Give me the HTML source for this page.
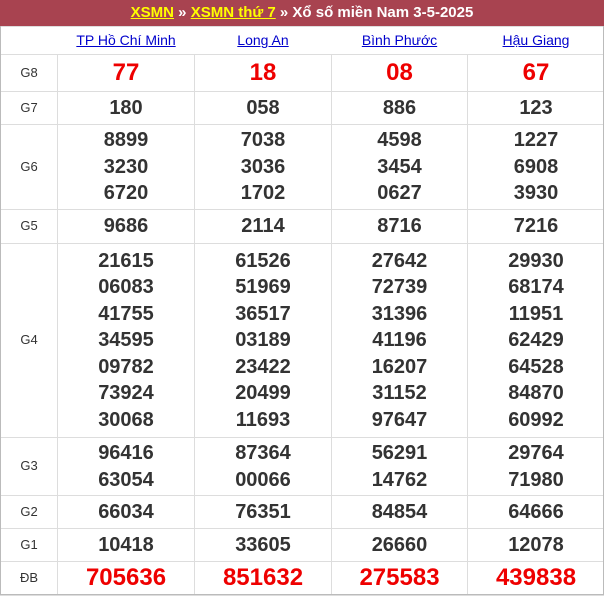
<!DOCTYPE html><html><head><meta charset="utf-8"><style>
body{margin:0;width:604px;height:596px;overflow:hidden;background:#fff;font-family:"Liberation Sans",Arial,sans-serif}
.hd{position:absolute;left:0;top:0;width:604px;height:26px;background:#a84350;color:#fff;font-weight:bold;font-size:15px;line-height:25px;text-align:center}
.hd a{color:#ff0;text-decoration:underline}
table{position:absolute;left:0;top:26px;width:604px;border-collapse:collapse;table-layout:fixed}
td{border:1px solid #ddd;text-align:center;padding:0;color:#333;font-weight:bold;font-size:20px;line-height:26.5px}
td.l{font-weight:normal;font-size:13px;color:#333}
tr.h td{border-left:none;border-right:none;font-weight:normal;font-size:14px;height:27px}
tr.h a{color:#00c;text-decoration:underline}
.r{color:#e00;font-size:24px}
.o{position:absolute;left:0;top:26px;width:602px;height:568px;border:1px solid #bbb;border-top:none}
</style></head><body>
<div class="hd"><a>XSMN</a> » <a>XSMN thứ 7</a> » Xổ số miền Nam 3-5-2025</div>
<table>
<col style="width:57px"><col style="width:137px"><col style="width:137px"><col style="width:136px"><col style="width:137px">
<tr class="h"><td></td><td><a>TP Hồ Chí Minh</a></td><td><a>Long An</a></td><td><a>Bình Phước</a></td><td><a>Hậu Giang</a></td></tr>
<tr style="height:37px"><td class="l">G8</td><td class="r">77</td><td class="r">18</td><td class="r">08</td><td class="r">67</td></tr>
<tr style="height:33px"><td class="l">G7</td><td>180</td><td>058</td><td>886</td><td>123</td></tr>
<tr style="height:85px"><td class="l">G6</td><td>8899<br>3230<br>6720</td><td>7038<br>3036<br>1702</td><td>4598<br>3454<br>0627</td><td>1227<br>6908<br>3930</td></tr>
<tr style="height:34px"><td class="l">G5</td><td>9686</td><td>2114</td><td>8716</td><td>7216</td></tr>
<tr style="height:194px"><td class="l">G4</td><td>21615<br>06083<br>41755<br>34595<br>09782<br>73924<br>30068</td><td>61526<br>51969<br>36517<br>03189<br>23422<br>20499<br>11693</td><td>27642<br>72739<br>31396<br>41196<br>16207<br>31152<br>97647</td><td>29930<br>68174<br>11951<br>62429<br>64528<br>84870<br>60992</td></tr>
<tr style="height:58px"><td class="l">G3</td><td>96416<br>63054</td><td>87364<br>00066</td><td>56291<br>14762</td><td>29764<br>71980</td></tr>
<tr style="height:33px"><td class="l">G2</td><td>66034</td><td>76351</td><td>84854</td><td>64666</td></tr>
<tr style="height:33px"><td class="l">G1</td><td>10418</td><td>33605</td><td>26660</td><td>12078</td></tr>
<tr style="height:34px"><td class="l">ĐB</td><td class="r">705636</td><td class="r">851632</td><td class="r">275583</td><td class="r">439838</td></tr>
</table>
<div class="o"></div>
</body></html>
